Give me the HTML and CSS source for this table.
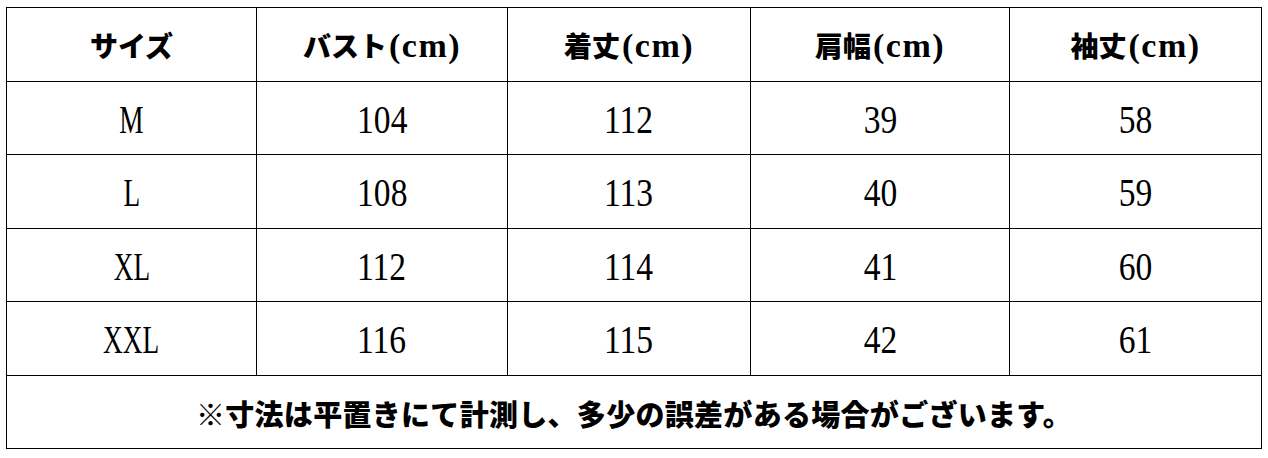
FILE: index.html
```html
<!DOCTYPE html>
<html lang="ja">
<head>
<meta charset="utf-8">
<title>サイズ表</title>
<link rel="stylesheet" href="styles.css">
</head>
<body>
<div class="sheet">
  <div class="cell head"><span class="jp">サイズ</span></div>
  <div class="cell head"><span class="jp">バスト</span><span class="unit">(cm)</span></div>
  <div class="cell head"><span class="jp">着丈</span><span class="unit">(cm)</span></div>
  <div class="cell head"><span class="jp">肩幅</span><span class="unit">(cm)</span></div>
  <div class="cell head"><span class="jp">袖丈</span><span class="unit">(cm)</span></div>

  <div class="cell"><span class="size">M</span></div>
  <div class="cell"><span class="num">104</span></div>
  <div class="cell"><span class="num">112</span></div>
  <div class="cell"><span class="num">39</span></div>
  <div class="cell"><span class="num">58</span></div>

  <div class="cell"><span class="size">L</span></div>
  <div class="cell"><span class="num">108</span></div>
  <div class="cell"><span class="num">113</span></div>
  <div class="cell"><span class="num">40</span></div>
  <div class="cell"><span class="num">59</span></div>

  <div class="cell"><span class="size">XL</span></div>
  <div class="cell"><span class="num">112</span></div>
  <div class="cell"><span class="num">114</span></div>
  <div class="cell"><span class="num">41</span></div>
  <div class="cell"><span class="num">60</span></div>

  <div class="cell"><span class="size">XXL</span></div>
  <div class="cell"><span class="num">116</span></div>
  <div class="cell"><span class="num">115</span></div>
  <div class="cell"><span class="num">42</span></div>
  <div class="cell"><span class="num">61</span></div>

  <div class="cell note"><span class="jp">※寸法は平置きにて計測し、多少の誤差がある場合がございます。</span></div>
</div>
</body>
</html>
```

FILE: styles.css
```css
html, body {
  margin: 0;
  padding: 0;
  background: #ffffff;
}

body {
  padding: 7px 0 0 6px;
}

.sheet {
  display: grid;
  grid-template-columns: 249px 250px 242px 258px 251px;
  grid-template-rows: 73px 72px 73px 72px 73px 72px;
  gap: 1px;
  padding: 1px;
  background: #000000;
  width: max-content;
}

.cell {
  background: #ffffff;
  display: flex;
  align-items: center;
  justify-content: center;
  color: #000000;
}

.head .jp {
  font-family: "Noto Sans CJK JP", sans-serif;
  font-weight: 900;
  font-size: 28px;
  line-height: 1;
}

.head .unit {
  font-family: "Liberation Serif", serif;
  font-weight: 700;
  font-size: 34px;
  line-height: 1;
  letter-spacing: 1.5px;
  margin-left: 2px;
  margin-top: 2px;
}

.num,
.size {
  display: inline-block;
  font-family: "Liberation Serif", serif;
  font-size: 39px;
  line-height: 1;
  color: #000000;
  margin-top: 2px;
}

.num {
  transform: scaleX(0.86);
}

.size {
  transform: scaleX(0.7);
}

.note {
  grid-column: 1 / -1;
}

.note .jp {
  font-family: "Noto Sans CJK JP", sans-serif;
  font-weight: 900;
  font-size: 29px;
  letter-spacing: 0.3px;
  line-height: 1;
  margin-top: 2px;
}
```
